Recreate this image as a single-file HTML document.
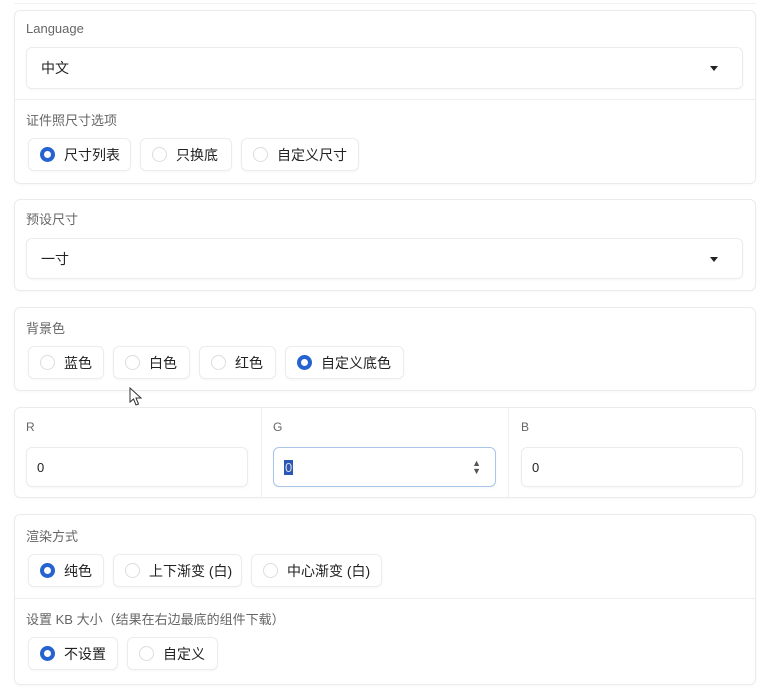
<!DOCTYPE html><html><head><meta charset="utf-8"><style>
*{box-sizing:border-box;margin:0;padding:0}
body{width:767px;height:696px;background:#fff;position:relative;overflow:hidden;font-family:"Liberation Sans","Noto Sans CJK SC",sans-serif;color:#222}
.a{position:absolute}
.panel{position:absolute;left:14px;width:742px;border:1px solid #ebebeb;border-radius:6px;background:#fff;box-shadow:0 1px 2px rgba(0,0,0,.03)}
.lbl{position:absolute;font-size:13px;color:#666}
.box{position:absolute;border:1px solid #ececec;border-radius:6px;background:#fff;font-size:14px;padding-left:14px;display:flex;align-items:center;box-shadow:0 1px 2px rgba(0,0,0,.04)}
.sep{position:absolute;left:15px;width:740px;height:1px;background:#eee}
.rad{position:absolute;height:33px;border:1px solid #ececec;border-radius:6px;font-size:14px;display:flex;align-items:center;padding-left:11px;box-shadow:0 1px 2px rgba(0,0,0,.04)}
.rad i{display:inline-block;width:15px;height:15px;border-radius:50%;border:1px solid #ddd;margin-right:9px}
.rad i.on{border:4px solid #2563d0;background:#fff}
.arr{position:absolute;right:24px;top:18px;width:0;height:0;border-left:4px solid transparent;border-right:4px solid transparent;border-top:5px solid #222}
</style></head><body>
<div class="sep" style="top:3px;left:14px;width:742px;background:#f2f2f2"></div>
<div class="panel" style="top:10px;height:174px"></div>
<div class="lbl" style="left:26px;top:21px">Language</div>
<div class="box" style="left:26px;top:47px;width:717px;height:42px">中文<span class="arr"></span></div>
<div class="sep" style="top:99px"></div>
<div class="lbl" style="left:26px;top:110px">证件照尺寸选项</div>
<div class="rad" style="left:28px;top:138px;width:103px"><i class="on"></i>尺寸列表</div>
<div class="rad" style="left:140px;top:138px;width:92px"><i></i>只换底</div>
<div class="rad" style="left:241px;top:138px;width:118px"><i></i>自定义尺寸</div>

<div class="panel" style="top:199px;height:92px"></div>
<div class="lbl" style="left:26px;top:209px">预设尺寸</div>
<div class="box" style="left:26px;top:238px;width:717px;height:41px">一寸<span class="arr"></span></div>

<div class="panel" style="top:307px;height:84px"></div>
<div class="lbl" style="left:26px;top:318px">背景色</div>
<div class="rad" style="left:28px;top:346px;width:76px"><i></i>蓝色</div>
<div class="rad" style="left:113px;top:346px;width:77px"><i></i>白色</div>
<div class="rad" style="left:199px;top:346px;width:77px"><i></i>红色</div>
<div class="rad" style="left:285px;top:346px;width:119px"><i class="on"></i>自定义底色</div>
<svg class="a" style="left:129px;top:387px" width="16" height="20" viewBox="0 0 16 20"><path d="M1 1 L1 15 L4.5 12 L7 18 L9.5 17 L7 11 L12 11 Z" fill="#fff" stroke="#333" stroke-width="1"/></svg>

<div class="panel" style="top:407px;height:91px"></div>
<div class="a" style="left:261px;top:408px;width:1px;height:89px;background:#eee"></div>
<div class="a" style="left:508px;top:408px;width:1px;height:89px;background:#eee"></div>
<div class="lbl" style="left:26px;top:420px;font-size:12px">R</div>
<div class="lbl" style="left:273px;top:420px;font-size:12px">G</div>
<div class="lbl" style="left:521px;top:420px;font-size:12px">B</div>
<div class="box" style="left:26px;top:447px;width:222px;height:40px;padding-left:10px;font-size:13px">0</div>
<div class="box" style="left:273px;top:447px;width:223px;height:40px;padding-left:10px;font-size:13px;border-color:#a9c6ea"><span style="background:#2a56b8;color:#ddd;padding:0 1px">0</span><span class="a" style="right:14px;top:11px;font-size:9px;line-height:8px;color:#555">▲<br>▼</span></div>
<div class="box" style="left:521px;top:447px;width:222px;height:40px;padding-left:10px;font-size:13px">0</div>

<div class="panel" style="top:514px;height:171px"></div>
<div class="lbl" style="left:26px;top:526px">渲染方式</div>
<div class="rad" style="left:28px;top:554px;width:76px"><i class="on"></i>纯色</div>
<div class="rad" style="left:113px;top:554px;width:129px"><i></i>上下渐变 (白)</div>
<div class="rad" style="left:251px;top:554px;width:131px"><i></i>中心渐变 (白)</div>
<div class="sep" style="top:598px"></div>
<div class="lbl" style="left:26px;top:609px">设置 KB 大小（结果在右边最底的组件下载）</div>
<div class="rad" style="left:28px;top:637px;width:90px"><i class="on"></i>不设置</div>
<div class="rad" style="left:127px;top:637px;width:91px"><i></i>自定义</div>
</body></html>
